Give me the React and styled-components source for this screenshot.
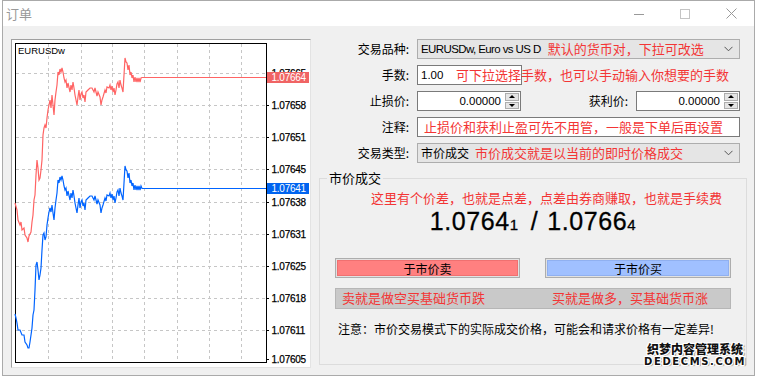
import React from 'react';
import styled, { createGlobalStyle } from 'styled-components';

const GlobalStyle = createGlobalStyle`
  html, body {
    margin: 0;
    padding: 0;
    background: #ffffff;
  }
  body {
    font-family: "Noto Sans CJK SC", "Noto Sans", sans-serif;
    color: #000;
  }
`;

const Window = styled.div`
  position: relative;
  margin-left: 2px;
  width: 753px;
  height: 376px;
  box-sizing: border-box;
  border: 1px solid #aaaaaa;
  background: #f0f0f0;
  display: flex;
  flex-direction: column;
  overflow: hidden;
`;

const TitleBar = styled.div`
  height: 25px;
  background: #ffffff;
  display: flex;
  align-items: center;
  justify-content: space-between;
`;

const Title = styled.span`
  padding-left: 3px;
  font-size: 13px;
  line-height: 25px;
  color: #999999;
`;

const Controls = styled.div`
  display: flex;
  height: 100%;
`;

const ControlButton = styled.div`
  width: 46px;
  height: 100%;
  display: flex;
  align-items: center;
  justify-content: center;
`;

const Body = styled.div`
  display: flex;
  gap: 8px;
  padding: 13px 8px 0 8px;
`;

const ChartPanel = styled.div`
  width: 300px;
  height: 329px;
  box-sizing: border-box;
  border: 1px solid #a0a0a0;
  border-right-color: #e3e3e3;
  border-bottom-color: #e3e3e3;
  background: #ffffff;
`;

const FormColumn = styled.div`
  width: 428px;
  display: flex;
  flex-direction: column;
`;

const FormGrid = styled.div`
  width: 421px;
  display: grid;
  grid-template-columns: 90px 1fr;
  column-gap: 8px;
  row-gap: 6px;
  grid-auto-rows: 20px;
`;

const Label = styled.div`
  font-size: 12px;
  line-height: 20px;
  text-align: right;
  white-space: nowrap;
`;

const Field = styled.div`
  position: relative;
  display: flex;
  align-items: center;
`;

const Combo = styled.div`
  flex: 1;
  height: 20px;
  box-sizing: border-box;
  border: 1px solid #adadad;
  background: #e5e5e5;
  display: flex;
  align-items: center;
  padding: 0 6px 0 3px;
  white-space: nowrap;
`;

const TextBox = styled.div`
  width: ${(p) => p.width || '100%'};
  height: 20px;
  box-sizing: border-box;
  border: 1px solid #7a7a7a;
  background: #ffffff;
  display: flex;
  align-items: center;
  padding-left: 3px;
  white-space: nowrap;
`;

const Latin = styled.span`
  font-family: "Liberation Sans", Arial, sans-serif;
  font-size: ${(p) => p.size || 11}px;
  line-height: 18px;
  letter-spacing: ${(p) => p.tight ? '-0.6px' : '0'};
`;

const Plain = styled.span`
  font-size: 12px;
  line-height: 18px;
`;

const Hint = styled.span`
  font-size: 13px;
  line-height: 18px;
  color: #f33535;
  margin-left: ${(p) => p.gap || 0}px;
  white-space: nowrap;
`;

const OverHint = styled(Hint)`
  position: absolute;
  left: 39px;
  top: 1px;
`;

const Chevron = styled.svg`
  margin-left: auto;
`;

const PriceRow = styled.div`
  display: flex;
  align-items: center;
`;

const SpinBox = styled.div`
  width: 104px;
  height: 20px;
  box-sizing: border-box;
  border: 1px solid #7a7a7a;
  background: #ffffff;
  display: flex;
`;

const SpinValue = styled.div`
  flex: 1;
  text-align: right;
  padding-right: 3px;
  font-family: "Liberation Sans", Arial, sans-serif;
  font-size: 11.5px;
  line-height: 18px;
`;

const SpinButtons = styled.div`
  width: 16px;
  display: flex;
  flex-direction: column;
  gap: 1px;
  padding: 1px;
  box-sizing: border-box;
  background: #ffffff;
`;

const SpinArrow = styled.div`
  flex: 1;
  border: 1px solid #adadad;
  background: #e5e5e5;
  display: flex;
  align-items: center;
  justify-content: center;

  &::after {
    content: '';
    width: 0;
    height: 0;
    border-left: 3px solid transparent;
    border-right: 3px solid transparent;
    ${(p) => p.down ? 'border-top: 3px solid #000;' : 'border-bottom: 3px solid #000;'}
  }
`;

const InlineLabel = styled(Label)`
  flex: 1;
  padding-right: 8px;
`;

const GroupBox = styled.div`
  position: relative;
  margin-top: 15px;
  height: 187px;
  box-sizing: border-box;
  border: 1px solid #dcdcdc;
  padding: 11px 15px 0 15px;
  display: flex;
  flex-direction: column;
`;

const Legend = styled.span`
  position: absolute;
  left: 7px;
  top: -10px;
  padding: 0 2px;
  background: #f0f0f0;
  font-size: 13px;
  line-height: 18px;
`;

const SpreadHint = styled(Hint)`
  margin-left: 36px;
  line-height: 16px;
`;

const BigPrice = styled.div`
  margin-top: 2px;
  text-align: center;
  font-family: "Liberation Sans", Arial, sans-serif;
  font-size: 25px;
  line-height: 26px;
  letter-spacing: 0.6px;
  color: #000;
  -webkit-text-stroke: 0.3px #000;
`;

const SmallDigit = styled.span`
  font-size: 15px;
`;

const Slash = styled.span`
  margin: 0 9px 0 12px;
`;

const ButtonRow = styled.div`
  display: grid;
  grid-template-columns: 185px 186px;
  column-gap: 25px;
  margin-top: ${(p) => p.top}px;
`;

const TradeButton = styled.div`
  height: 20px;
  box-sizing: border-box;
  border: 1px solid #adadad;
  padding: 1px;
  background: #e1e1e1;

  & > div {
    height: 100%;
    box-sizing: border-box;
    background: ${(p) => p.fill};
    border: 1px solid ${(p) => p.edge};
    font-size: 12px;
    line-height: 15px;
    text-align: center;
  }
`;

const InfoBar = styled.div`
  display: grid;
  grid-template-columns: 185px 186px;
  column-gap: 25px;
  margin-top: 10px;
  height: 21px;
  box-sizing: border-box;
  border: 1px solid #b6b6b6;
  background: #c9c9c9;

  & > span {
    padding-left: 6px;
    line-height: 18px;
  }
`;

const Note = styled.div`
  margin-top: 11px;
  padding-left: 3px;
  font-size: 12px;
  line-height: 18px;
  white-space: nowrap;
`;

const Watermark = styled.div`
  position: absolute;
  right: 0;
  bottom: -4px;
  display: flex;
  flex-direction: column;
  align-items: center;
  white-space: nowrap;
  font-weight: 900;
  color: #111;
  text-shadow: 1px 0 0 #fff, -1px 0 0 #fff, 0 1px 0 #fff, 0 -1px 0 #fff,
    1px 1px 0 #fff, -1px -1px 0 #fff, 1px -1px 0 #fff, -1px 1px 0 #fff,
    2px 1px 1px #888;
`;

const MarkCn = styled.span`
  font-size: 12px;
  line-height: 14px;
`;

const MarkEn = styled.span`
  font-family: "DejaVu Sans", sans-serif;
  font-size: 10px;
  line-height: 12px;
  letter-spacing: 1.6px;
`;

const redPts = [
  [15, 203], [17, 210], [18, 220], [20, 225], [21, 222], [22, 230], [24, 228], [25, 235], [27, 238], [28, 242],
  [29, 236], [31, 232], [32, 222], [33, 215], [34, 200], [35, 195], [36, 175], [37, 160], [38, 168], [39, 180],
  [40, 178], [41, 170], [42, 160], [43, 135], [44, 128], [45, 125], [46, 128], [47, 118], [48, 110], [49, 105],
  [50, 100], [51, 108], [52, 95], [53, 105], [54, 115], [55, 100], [56, 92], [57, 85], [58, 72], [59, 75],
  [60, 69], [61, 72], [62, 68], [63, 72], [64, 78], [65, 82], [66, 80], [67, 88], [68, 83], [70, 92], [71, 85],
  [72, 90], [73, 82], [74, 88], [75, 95], [77, 105], [78, 97], [79, 90], [80, 100], [81, 94], [82, 92], [83, 98],
  [84, 95], [85, 102], [86, 92], [88, 90], [90, 88], [92, 88], [94, 92], [95, 88], [97, 96], [98, 92], [100, 97],
  [101, 105], [102, 100], [103, 97], [105, 90], [106, 93], [107, 87], [109, 88], [110, 85], [111, 90], [112, 86],
  [113, 92], [114, 88], [115, 95], [116, 90], [117, 84], [118, 82], [119, 88], [120, 80], [121, 85], [122, 88],
  [123, 92], [124, 75], [125, 58], [126, 62], [127, 63], [128, 70], [129, 65], [130, 75], [131, 72], [132, 78],
  [133, 75], [134, 82], [135, 77], [136, 82], [137, 78], [138, 82], [139, 78], [140, 82], [141, 78], [142, 77.5],
  [266, 77.5],
];

const blueStart = [
  [15, 314], [16, 318], [17, 323], [18, 330], [20, 330], [22, 335], [24, 335], [25, 342], [27, 345], [28, 348],
  [29, 348], [30, 342], [31, 335], [32, 328], [33, 315], [34, 310], [35, 290], [36, 265], [37, 262], [38, 270],
  [39, 280], [40, 275], [41, 268], [42, 250], [43, 235], [44, 233], [45, 240], [46, 237], [47, 225], [48, 218],
  [49, 212], [50, 208], [51, 212], [52, 205], [53, 213], [54, 220],
];

const bluePts = [
  ...blueStart,
  ...redPts.filter(([x]) => x >= 55 && x < 142).map(([x, y]) => [x, y + 108]),
  [142, 188.5],
  [266, 188.5],
];

const toPath = (pts) => pts.map(([x, y], i) => `${i ? 'L' : 'M'}${x} ${y}`).join(' ');

const gridY = [73, 105, 137, 169, 202, 234, 266, 298, 330];
const gridX = [48, 81, 112, 144, 177, 209, 241];

const axis = [
  ['1.07665', 73], ['1.07658', 105], ['1.07651', 137], ['1.07645', 169], ['1.07638', 202],
  ['1.07631', 234], ['1.07625', 266], ['1.07618', 298], ['1.07611', 330], ['1.07605', 359],
];

function PriceChart() {
  return (
    <svg width="298" height="327" viewBox="12 40 298 327" fontFamily="Liberation Sans, Arial, sans-serif">
      {gridY.map((y) => (
        <line key={'h' + y} x1="16" x2="266" y1={y + 0.5} y2={y + 0.5} stroke="#c6c6c6" strokeDasharray="3 3" />
      ))}
      {gridX.map((x) => (
        <line key={'v' + x} x1={x + 0.5} x2={x + 0.5} y1="44" y2="362" stroke="#c6c6c6" strokeDasharray="3 3" />
      ))}
      <rect x="15.5" y="43.5" width="251" height="319" fill="none" stroke="#000" strokeWidth="1" />
      <text x="18" y="54" fontSize="9.5">EURUSDw</text>
      <path d={toPath(redPts)} fill="none" stroke="#ff6464" strokeWidth="1.2" />
      <path d={toPath(bluePts)} fill="none" stroke="#0064ff" strokeWidth="1.2" />
      {axis.map(([t, y]) => (
        <g key={t}>
          <line x1="266" x2="269" y1={y + 0.5} y2={y + 0.5} stroke="#000" />
          <text x="271.5" y={y + 4} fontSize="10" letterSpacing="-0.25" fill="#000" stroke="#000" strokeWidth="0.25">
            {t}
          </text>
        </g>
      ))}
      <rect x="267" y="72" width="42" height="11" fill="#f06464" />
      <text x="271.5" y="81" fontSize="10" letterSpacing="-0.25" fill="#fff">1.07664</text>
      <rect x="267" y="183" width="42" height="11" fill="#0064f0" />
      <text x="271.5" y="192" fontSize="10" letterSpacing="-0.25" fill="#fff">1.07641</text>
    </svg>
  );
}

function DownChevron() {
  return (
    <Chevron width="9" height="6" viewBox="0 0 9 6">
      <path d="M0.5 0.8 L4.5 4.8 L8.5 0.8" fill="none" stroke="#555" strokeWidth="1" />
    </Chevron>
  );
}

function Spin({ value }) {
  return (
    <SpinBox>
      <SpinValue>{value}</SpinValue>
      <SpinButtons>
        <SpinArrow />
        <SpinArrow down />
      </SpinButtons>
    </SpinBox>
  );
}

export default function App() {
  return (
    <>
      <GlobalStyle />
      <Window>
        <TitleBar>
          <Title>订单</Title>
          <Controls>
            <ControlButton>
              <svg width="10" height="10" viewBox="0 0 10 10">
                <line x1="0" x2="10" y1="5.5" y2="5.5" stroke="#999" />
              </svg>
            </ControlButton>
            <ControlButton>
              <svg width="10" height="10" viewBox="0 0 10 10">
                <rect x="0.5" y="0.5" width="9" height="9" fill="none" stroke="#c4c4c4" />
              </svg>
            </ControlButton>
            <ControlButton>
              <svg width="11" height="11" viewBox="0 0 11 11">
                <path d="M0.5 0.5 L10.5 10.5 M10.5 0.5 L0.5 10.5" stroke="#999" />
              </svg>
            </ControlButton>
          </Controls>
        </TitleBar>
        <Body>
          <ChartPanel>
            <PriceChart />
          </ChartPanel>
          <FormColumn>
            <FormGrid>
              <Label>交易品种:</Label>
              <Field>
                <Combo>
                  <Latin tight size={11.5}>EURUSDw, Euro vs US D</Latin>
                  <Hint gap={7}>默认的货币对，下拉可改选</Hint>
                  <DownChevron />
                </Combo>
              </Field>

              <Label>手数:</Label>
              <Field>
                <TextBox width="105px">
                  <Latin size={11.5}>1.00</Latin>
                </TextBox>
                <OverHint>可下拉选择手数，也可以手动输入你想要的手数</OverHint>
              </Field>

              <Label>止损价:</Label>
              <PriceRow>
                <Spin value="0.00000" />
                <InlineLabel>获利价:</InlineLabel>
                <Spin value="0.00000" />
              </PriceRow>

              <Label>注释:</Label>
              <Field>
                <TextBox>
                  <Hint gap={3}>止损价和获利止盈可先不用管，一般是下单后再设置</Hint>
                </TextBox>
              </Field>

              <Label>交易类型:</Label>
              <Field>
                <Combo>
                  <Plain>市价成交</Plain>
                  <Hint gap={6}>市价成交就是以当前的即时价格成交</Hint>
                  <DownChevron />
                </Combo>
              </Field>
            </FormGrid>

            <GroupBox>
              <Legend>市价成交</Legend>
              <SpreadHint>这里有个价差，也就是点差，点差由券商赚取，也就是手续费</SpreadHint>
              <BigPrice>
                1.0764<SmallDigit>1</SmallDigit>
                <Slash>/</Slash>
                1.0766<SmallDigit>4</SmallDigit>
              </BigPrice>
              <ButtonRow top={20}>
                <TradeButton fill="#ff8080" edge="#f07070">
                  <div>于市价卖</div>
                </TradeButton>
                <TradeButton fill="#a0c0ff" edge="#90b0f0">
                  <div>于市价买</div>
                </TradeButton>
              </ButtonRow>
              <InfoBar>
                <Hint>卖就是做空买基础货币跌</Hint>
                <Hint>买就是做多，买基础货币涨</Hint>
              </InfoBar>
              <Note>注意：市价交易模式下的实际成交价格，可能会和请求价格有一定差异!</Note>
              <Watermark>
                <MarkCn>织梦内容管理系统</MarkCn>
                <MarkEn>DEDECMS.COM</MarkEn>
              </Watermark>
            </GroupBox>
          </FormColumn>
        </Body>
      </Window>
    </>
  );
}
